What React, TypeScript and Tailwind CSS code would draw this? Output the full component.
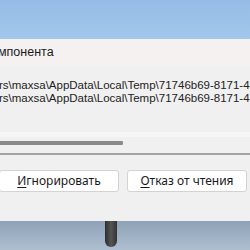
export default function App() {
  const path = "rs\\maxsa\\AppData\\Local\\Temp\\71746b69-8171-4a2c-9e1f";
  return (
    <main
      className="w-[250px] h-[250px] overflow-hidden flex flex-col bg-[#9fc3e8]"
      style={{ fontFamily: '"Noto Sans", "Open Sans", sans-serif' }}
    >
      <div className="h-[39px] bg-gradient-to-b from-[#96bce6] to-[#a3c7eb]" />

      <section className="h-[182px] flex flex-col bg-[#f0f0f0]">
        <div
          className="h-[26px] flex items-center bg-[#f5f1f1] text-[12.5px] text-[#1a1a1a] whitespace-nowrap overflow-hidden"
          style={{ fontFamily: '"Liberation Sans", Arial, sans-serif' }}
        >
          <span className="-ml-[2px]">мпонента</span>
        </div>

        <div
          className="mt-[14px] flex flex-col gap-[1px] text-[11.5px] leading-[12px] text-[#222] whitespace-nowrap overflow-hidden"
          style={{ fontFamily: '"Liberation Sans", Arial, sans-serif' }}
        >
          <span className="-ml-[1px]">{path}</span>
          <span className="-ml-[1px]">{path}</span>
        </div>

        <div className="mt-[28px] h-[5px] bg-[#f6f6f6]" />
        <div className="mt-[4px] h-[4px] w-[123px] bg-[#8a8a8a] rounded-r-[1px]" />
        <div className="mt-[8px] h-[2px] bg-[#a3a3a3]" />

        <div className="mt-[15px] flex gap-[8px] -ml-[1px]">
          <button className="w-[120px] h-[22px] bg-white border border-[#d3d3d3] rounded-[3px] text-[12px] text-[#1a1a1a]">
            <span className="underline underline-offset-2">И</span>гнорировать
          </button>
          <button className="w-[120px] h-[22px] bg-white border border-[#d3d3d3] rounded-[3px] text-[12px] text-[#1a1a1a]">
            <span className="underline underline-offset-2">О</span>тказ от чтения
          </button>
        </div>
      </section>

      <div className="flex-1 relative bg-gradient-to-b from-[#8ea2b7] to-[#aebfd0]">
        <div className="absolute left-[105px] top-0 w-[12px] h-[26px] rounded-b-[6px] bg-gradient-to-r from-[#2e2e2e] via-[#555] to-[#333]" />
      </div>
    </main>
  );
}
